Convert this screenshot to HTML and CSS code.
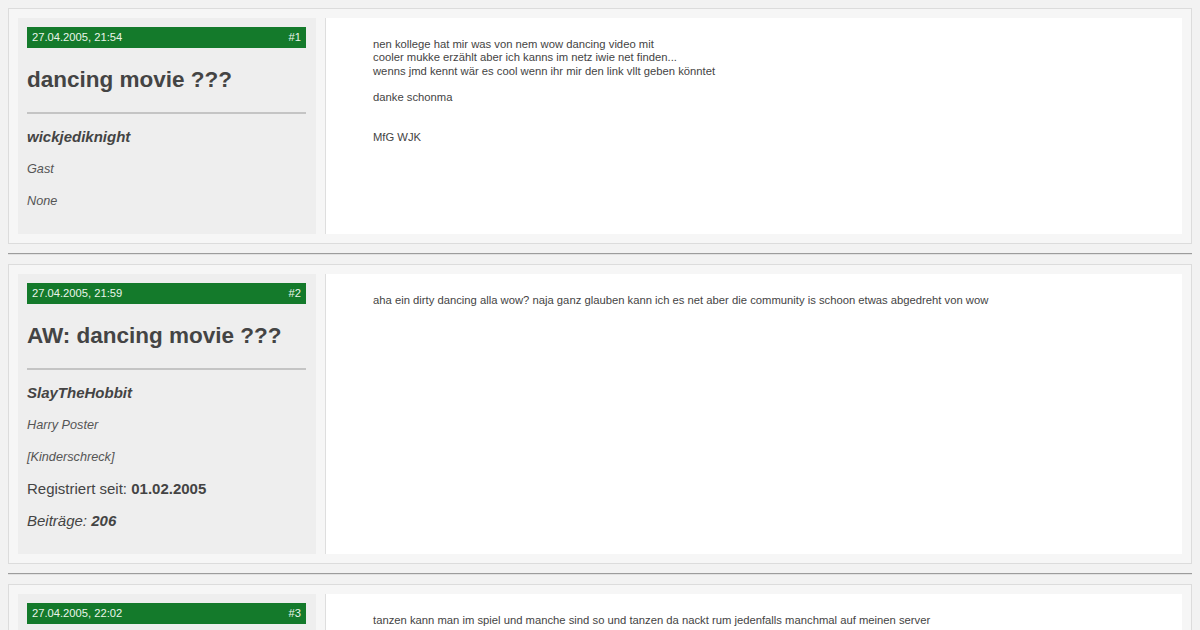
FILE: index.html
```html
<!DOCTYPE html>
<html lang="de">
<head>
    <meta charset="UTF-8">
    <meta name="viewport" content="width=device-width, initial-scale=1.0">
    <title>dancing movie ???</title>
    <link rel="stylesheet" href="styles.css">
</head>
<body>
    <div class="post">
        <div class="post-info">
            <div class="post-bar">
                <span>27.04.2005, 21:54</span>
                <span>#1</span>
            </div>
            <h2 class="post-title">dancing movie ???</h2>
            <hr class="info-sep">
            <div class="user-info">
                <div class="user-name">wickjediknight</div>
                <div class="user-meta">Gast</div>
                <div class="user-meta">None</div>
            </div>
        </div>
        <div class="post-body">
            nen kollege hat mir was von nem wow dancing video mit<br>
            cooler mukke erzählt aber ich kanns im netz iwie net finden...<br>
            wenns jmd kennt wär es cool wenn ihr mir den link vllt geben könntet<br>
            <br>
            danke schonma<br>
            <br>
            <br>
            MfG WJK
        </div>
    </div>

    <hr class="post-sep">

    <div class="post">
        <div class="post-info">
            <div class="post-bar">
                <span>27.04.2005, 21:59</span>
                <span>#2</span>
            </div>
            <h2 class="post-title">AW: dancing movie ???</h2>
            <hr class="info-sep">
            <div class="user-info">
                <div class="user-name">SlayTheHobbit</div>
                <div class="user-meta">Harry Poster</div>
                <div class="user-meta">[Kinderschreck]</div>
                <div class="user-stat">Registriert seit: <b>01.02.2005</b></div>
                <div class="user-stat"><i>Beiträge: <b>206</b></i></div>
            </div>
        </div>
        <div class="post-body">
            aha ein dirty dancing alla wow? naja ganz glauben kann ich es net aber die community is schoon etwas abgedreht von wow
        </div>
    </div>

    <hr class="post-sep">

    <div class="post">
        <div class="post-info">
            <div class="post-bar">
                <span>27.04.2005, 22:02</span>
                <span>#3</span>
            </div>
            <h2 class="post-title">AW: dancing movie ???</h2>
            <hr class="info-sep">
        </div>
        <div class="post-body">
            tanzen kann man im spiel und manche sind so und tanzen da nackt rum jedenfalls manchmal auf meinen server
        </div>
    </div>
</body>
</html>
```

FILE: styles.css
```css
* {
    box-sizing: border-box;
}

body {
    margin: 8px;
    font-family: 'Liberation Sans', Arial, sans-serif;
    color: #444;
    background-color: #f2f2f2;
}

.post {
    display: flex;
    gap: 9px;
    padding: 9px;
    background: #f6f6f6;
    border: 1px solid #dcdcdc;
}

.post-info {
    flex: 0 0 298px;
    padding: 9px 10px 11px 9px;
    background: #eeeeee;
}

.post-bar {
    display: flex;
    justify-content: space-between;
    height: 21px;
    padding: 0 5px;
    line-height: 21px;
    font-size: 11.2px;
    color: #eaf5ea;
    background: #147a2b;
}

.post-title {
    margin: 18px 0 0;
    font-size: 22.5px;
    line-height: 28px;
    font-weight: bold;
    color: #444;
}

.info-sep {
    margin: 18px 0 0;
    border: 0;
    border-top: 2px solid #c4c4c4;
}

.user-info {
    margin-top: 13px;
}

.user-info > div {
    line-height: 20px;
    margin-bottom: 12px;
}

.user-name {
    font-size: 15px;
    font-weight: bold;
    font-style: italic;
}

.user-meta {
    font-size: 12.7px;
    font-style: italic;
    color: #555;
}

.user-stat {
    font-size: 15px;
}

.post-body {
    flex: 1;
    padding: 20px 47px;
    font-size: 11.25px;
    line-height: 13.3px;
    color: #444;
    background: #fff;
    border-left: 1px solid #dedede;
}

.post-sep {
    margin: 9px 0;
    border: 0;
    border-top: 1px solid #9c9c9c;
    border-bottom: 1px solid #e2e2e2;
}
```
